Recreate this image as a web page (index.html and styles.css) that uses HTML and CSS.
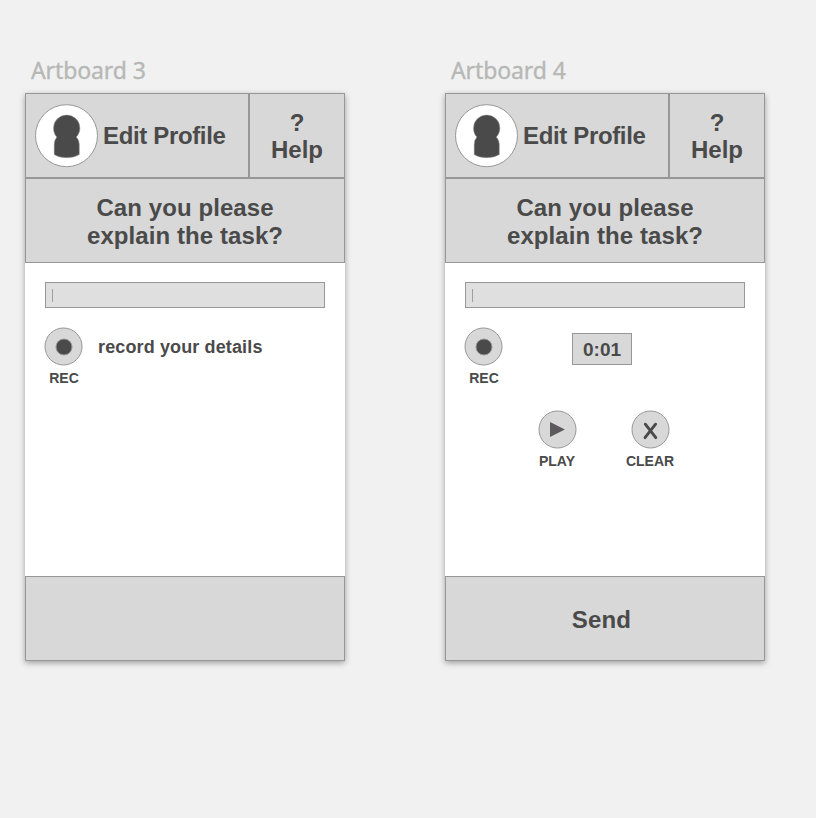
FILE: index.html
```html
<!DOCTYPE html>
<html lang="en">
<head>
<meta charset="utf-8">
<title>Artboards</title>
<link rel="stylesheet" href="styles.css">
</head>
<body>
<main class="canvas">
  <section class="frame">
    <h2 class="frame-name">Artboard 3</h2>
    <div class="artboard">
      <header class="top">
        <div class="profile">
          <svg class="avatar" viewBox="0 0 64 64"><circle class="disc" cx="32.500" cy="31.700" r="31"/><path class="person" d="M22.800 33C20.600 30.700 19.500 27.600 19.500 24.200A13.200 13.200 0 1 1 45.900 24.200C45.900 27.600 44.500 30.700 42.300 33Q45.300 36 45.300 41V50.500Q40 53.700 32.700 53.700Q25 53.700 20.200 50.500V41Q20.200 36 22.800 33Z"/></svg>
          <span class="title edit">Edit Profile</span>
        </div>
        <div class="help title"><span>?</span><span>Help</span></div>
      </header>
      <div class="question title"><span>Can you please</span><span>explain the task?</span></div>
      <div class="content">
        <div class="field"><i class="caret"></i></div>
        <div class="recorder">
          <div class="control"><svg class="button" viewBox="0 0 38 38"><circle class="key" cx="19.500" cy="19.500" r="18.500"/><circle class="dot" cx="20" cy="20" r="8"/></svg><span class="label rec">REC</span></div>
          <span class="hint">record your details</span>
        </div>
      </div>
      <footer class="send title"></footer>
    </div>
  </section>
  <section class="frame">
    <h2 class="frame-name">Artboard 4</h2>
    <div class="artboard">
      <header class="top">
        <div class="profile">
          <svg class="avatar" viewBox="0 0 64 64"><circle class="disc" cx="32.500" cy="31.700" r="31"/><path class="person" d="M22.800 33C20.600 30.700 19.500 27.600 19.500 24.200A13.200 13.200 0 1 1 45.900 24.200C45.900 27.600 44.500 30.700 42.300 33Q45.300 36 45.300 41V50.500Q40 53.700 32.700 53.700Q25 53.700 20.200 50.500V41Q20.200 36 22.800 33Z"/></svg>
          <span class="title edit">Edit Profile</span>
        </div>
        <div class="help title"><span>?</span><span>Help</span></div>
      </header>
      <div class="question title"><span>Can you please</span><span>explain the task?</span></div>
      <div class="content">
        <div class="field"><i class="caret"></i></div>
        <div class="recorder">
          <div class="control"><svg class="button" viewBox="0 0 38 38"><circle class="key" cx="19.500" cy="19.500" r="18.500"/><circle class="dot" cx="20" cy="20" r="8"/></svg><span class="label rec">REC</span></div>
          <span class="timer">0:01</span>
        </div>
        <div class="playback">
          <div class="control"><svg class="button" viewBox="0 0 38 38"><circle class="key" cx="19.500" cy="19.500" r="18.500"/><path class="play" d="M12 12L26.900 19.500L12 27Z"/></svg><span class="label">PLAY</span></div>
          <div class="control"><svg class="button" viewBox="0 0 38 38"><circle class="key" cx="19.500" cy="19.500" r="18.500"/><path class="cross" d="M14.300 14.200L24.800 27.700M24.600 14.200L14 27.700"/></svg><span class="label">CLEAR</span></div>
        </div>
      </div>
      <footer class="send title">Send</footer>
    </div>
  </section>
</main>
</body>
</html>
```
FILE: styles.css
```css
* { box-sizing: border-box; }
body {
  margin: 0;
  min-height: 100vh;
  background: #f1f1f1;
  color: #4a4a4a;
  font-family: "Liberation Sans", Arial, sans-serif;
}
.canvas { display: flex; gap: 100px; padding: 55px 0 0 25px; }
.frame { width: 320px; }
.frame-name {
  margin: 0;
  padding-left: 6px;
  height: 38px;
  color: #b6b8b6;
  font: 400 23px/31px "Noto Sans", sans-serif;
  letter-spacing: -0.1px;
  -webkit-text-stroke: 0.35px #b6b8b6;
}
.artboard {
  display: flex;
  flex-direction: column;
  height: 568px;
  background: #fff;
  box-shadow: 0 2px 6px rgba(0, 0, 0, 0.35);
}
.title { font-size: 24px; font-weight: 700; line-height: 28px; }
.top { display: flex; height: 85px; }
.profile, .help, .question, .send { background: #d8d8d8; border: 1px solid #979797; }
.profile { display: flex; align-items: center; width: 224px; padding-left: 8px; }
.avatar { width: 64px; height: 64px; flex: none; }
.disc { fill: #fff; stroke: #979797; }
.person { fill: #4a4a4a; stroke: #979797; stroke-width: 0.5; }
.edit { margin-left: 5px; letter-spacing: -0.35px; white-space: nowrap; }
.help { display: flex; flex-direction: column; align-items: center; justify-content: center; width: 96px; line-height: 27px; }
.question { display: flex; flex-direction: column; align-items: center; justify-content: center; height: 85px; padding-top: 2px; letter-spacing: 0.08px; }
.content { flex: 1; padding: 19px 20px 0; }
.field { height: 26px; padding: 6px 0 0 6px; border: 1px solid #979797; background: #dfdfdf; }
.caret { display: block; width: 1px; height: 13px; background: #a0a0a0; }
.recorder { display: flex; align-items: flex-start; margin: 19px 0 0 -1px; height: 83px; }
.control { display: flex; flex-direction: column; align-items: center; width: 38px; }
.button { display: block; width: 38px; height: 38px; overflow: visible; }
.key { fill: #d8d8d8; stroke: #979797; }
.dot { fill: #4a4a4a; stroke: #979797; stroke-width: 1; }
.label { margin-top: 5px; font-size: 14px; font-weight: 700; line-height: 16px; white-space: nowrap; }
.rec { padding-left: 2px; }
.hint { margin: 9px 0 0 16px; font-size: 18px; font-weight: 700; line-height: 22px; letter-spacing: 0.13px; }
.timer { width: 60px; height: 32px; margin: 6px 0 0 70px; border: 1px solid #979797; background: #d8d8d8; font-size: 19px; font-weight: 700; line-height: 32px; text-align: center; }
.playback { display: flex; gap: 55px; margin-left: 73px; }
.play { fill: #5c5a5c; }
.cross { fill: none; stroke: #4a4a4a; stroke-width: 2.9; stroke-linecap: round; }
.send { display: flex; align-items: center; justify-content: center; height: 85px; padding: 2px 7px 0 0; letter-spacing: 0.2px; }
```
